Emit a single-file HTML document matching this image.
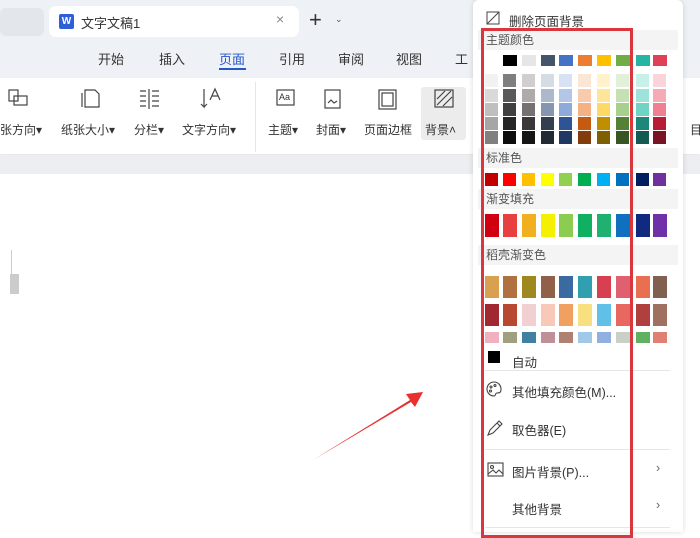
<!DOCTYPE html>
<html><head><meta charset="utf-8"><style>
*{margin:0;padding:0;box-sizing:border-box}
body{width:700px;height:532px;overflow:hidden;position:relative;background:#fff;font-family:"Liberation Sans","Noto Sans CJK SC",sans-serif;color:#333}
.a{position:absolute}
.t{font-size:13px;white-space:nowrap}
.sw{position:absolute;width:14px}
.lbl{position:absolute;left:478px;width:200px;height:20px;background:#f4f4f4;font-size:12px;color:#555;padding-left:8px;line-height:20px}
.mi{position:absolute;font-size:12.5px;color:#333;white-space:nowrap}
.sep{position:absolute;left:485px;width:185px;height:1px;background:#e6e6e6}
</style></head><body>
<!-- top chrome -->
<div class="a" style="left:0;top:0;width:700px;height:78px;background:#eef1f5"></div>
<div class="a" style="left:0;top:8px;width:44px;height:28px;background:#e3e6ea;border-radius:6px"></div>
<div class="a" style="left:49px;top:6px;width:250px;height:31px;background:#fff;border-radius:7px"></div>
<div class="a" style="left:59px;top:14px;width:15px;height:15px;background:#2f5fd8;border-radius:2px;color:#fff;font-size:10px;font-weight:bold;text-align:center;line-height:15px">W</div>
<div class="a t" style="left:81px;top:13px">文字文稿1</div>
<div class="a" style="left:276px;top:11px;font-size:14px;color:#888">×</div>
<div class="a" style="left:309px;top:7px;font-size:22px;color:#333">+</div>
<div class="a" style="left:335px;top:14px;font-size:9px;color:#555">⌄</div>
<div class="a t" style="left:98px;top:49px">开始</div>
<div class="a t" style="left:159px;top:49px">插入</div>
<div class="a t" style="left:219px;top:49px;color:#2656c8">页面</div>
<div class="a" style="left:219px;top:68px;width:27px;height:2px;background:#2656c8"></div>
<div class="a t" style="left:279px;top:49px">引用</div>
<div class="a t" style="left:338px;top:49px">审阅</div>
<div class="a t" style="left:396px;top:49px">视图</div>
<div class="a t" style="left:455px;top:49px">工</div>
<!-- ribbon -->
<div class="a" style="left:0;top:78px;width:700px;height:76px;background:#fff;box-shadow:0 1px 2px #ddd"></div>
<div class="a" style="left:0;top:155px;width:700px;height:19px;background:#eceef1"></div>
<div class="a" style="left:255px;top:82px;width:1px;height:70px;background:#e6e6e6"></div>
<div class="a" style="left:421px;top:87px;width:45px;height:53px;background:#ececec;border-radius:3px"></div>
<svg class="a" style="left:0;top:85px" width="470" height="30" fill="none" stroke="#444" stroke-width="1.2">
<rect x="9" y="5" width="9" height="11"/><rect x="14" y="11" width="13" height="9"/>
<path d="M85 5h10l4 4v13H85z M82 8v14"/>
<path d="M140 6h6M140 11h6M140 16h6M140 21h6M149 4v20M152 6h7M152 11h7M152 16h7M152 21h7"/>
<path d="M204 4v18l-3-3M204 22l3-3M210 15l5-11 5 11M212 11h6"/>
<rect x="277" y="5" width="17" height="15"/><rect x="325" y="5" width="15" height="18"/><path d="M328 18l3-3 3 3 3-2"/>
<rect x="379" y="5" width="17" height="19"/><rect x="382" y="8" width="11" height="13"/>
<rect x="435" y="5" width="18" height="17"/><path d="M437 14l8-8M437 20l14-14M443 21l9-9"/>
</svg>
<div class="a" style="left:279px;top:92px;font-size:9px">Aa</div>
<div class="a t" style="left:0;top:121px;font-size:12px">张方向▾</div>
<div class="a t" style="left:61px;top:121px;font-size:12px">纸张大小▾</div>
<div class="a t" style="left:134px;top:121px;font-size:12px">分栏▾</div>
<div class="a t" style="left:182px;top:121px;font-size:12px">文字方向▾</div>
<div class="a t" style="left:268px;top:121px;font-size:12px">主题▾</div>
<div class="a t" style="left:316px;top:121px;font-size:12px">封面▾</div>
<div class="a t" style="left:364px;top:121px;font-size:12px">页面边框</div>
<div class="a t" style="left:425px;top:121px;font-size:12px">背景˄</div>
<div class="a t" style="left:690px;top:121px;font-size:12px">目</div>
<!-- doc marks -->
<div class="a" style="left:11px;top:250px;width:1px;height:25px;background:#ccc"></div>
<div class="a" style="left:10px;top:274px;width:9px;height:20px;background:#ccc"></div>
<!-- arrow -->
<svg class="a" style="left:300px;top:380px" width="140" height="90"><path d="M13 80L110 20l-4-6 17-2-8 15-4-5z" fill="#e8302f"/></svg>
<!-- panel -->
<div class="a" style="left:473px;top:0;width:210px;height:532px;background:#fff;box-shadow:0 0 6px rgba(0,0,0,.15);border-radius:6px 6px 0 0"></div>
<svg class="a" style="left:486px;top:11px" width="14" height="14" fill="none" stroke="#444"><rect x="1" y="1" width="12" height="12"/><path d="M1 13L13 1"/></svg>
<div class="mi" style="left:509px;top:11px">删除页面背景</div>
<div class="lbl" style="top:30px">主题颜色</div>
<div class="lbl" style="top:148px">标准色</div>
<div class="lbl" style="top:189px">渐变填充</div>
<div class="lbl" style="top:245px">稻壳渐变色</div>
<div id="g"></div>
<!-- theme -->
<div class="sw" style="left:485px;top:55px;height:11px;background:#fff"></div>
<div class="sw" style="left:503px;top:55px;height:11px;background:#000"></div>
<div class="sw" style="left:522px;top:55px;height:11px;background:#e7e6e6"></div>
<div class="sw" style="left:541px;top:55px;height:11px;background:#44546a"></div>
<div class="sw" style="left:559px;top:55px;height:11px;background:#4472c4"></div>
<div class="sw" style="left:578px;top:55px;height:11px;background:#ed7d31"></div>
<div class="sw" style="left:597px;top:55px;height:11px;background:#ffc000"></div>
<div class="sw" style="left:616px;top:55px;height:11px;background:#70ad47"></div>
<div class="sw" style="left:636px;top:55px;height:11px;background:#26b5a5"></div>
<div class="sw" style="left:653px;top:55px;height:11px;background:#e04058"></div>
<svg class="a" style="left:485px;top:74px" width="185" height="72">
<g>
<rect x="0" y="0" width="13" height="13" fill="#f2f2f2"/><rect x="0" y="15" width="13" height="13" fill="#d9d9d9"/><rect x="0" y="29" width="13" height="13" fill="#bfbfbf"/><rect x="0" y="43" width="13" height="13" fill="#a6a6a6"/><rect x="0" y="57" width="13" height="13" fill="#808080"/>
<rect x="18" y="0" width="13" height="13" fill="#7f7f7f"/><rect x="18" y="15" width="13" height="13" fill="#595959"/><rect x="18" y="29" width="13" height="13" fill="#404040"/><rect x="18" y="43" width="13" height="13" fill="#262626"/><rect x="18" y="57" width="13" height="13" fill="#0d0d0d"/>
<rect x="37" y="0" width="13" height="13" fill="#d0cece"/><rect x="37" y="15" width="13" height="13" fill="#aeaaaa"/><rect x="37" y="29" width="13" height="13" fill="#757171"/><rect x="37" y="43" width="13" height="13" fill="#3b3838"/><rect x="37" y="57" width="13" height="13" fill="#161616"/>
<rect x="56" y="0" width="13" height="13" fill="#d6dce4"/><rect x="56" y="15" width="13" height="13" fill="#adb9ca"/><rect x="56" y="29" width="13" height="13" fill="#8496b0"/><rect x="56" y="43" width="13" height="13" fill="#333f4f"/><rect x="56" y="57" width="13" height="13" fill="#222a35"/>
<rect x="74" y="0" width="13" height="13" fill="#d9e2f3"/><rect x="74" y="15" width="13" height="13" fill="#b4c6e7"/><rect x="74" y="29" width="13" height="13" fill="#8eaadb"/><rect x="74" y="43" width="13" height="13" fill="#2f5496"/><rect x="74" y="57" width="13" height="13" fill="#1f3864"/>
<rect x="93" y="0" width="13" height="13" fill="#fbe5d5"/><rect x="93" y="15" width="13" height="13" fill="#f7cbac"/><rect x="93" y="29" width="13" height="13" fill="#f4b183"/><rect x="93" y="43" width="13" height="13" fill="#c55a11"/><rect x="93" y="57" width="13" height="13" fill="#833c0b"/>
<rect x="112" y="0" width="13" height="13" fill="#fff2cc"/><rect x="112" y="15" width="13" height="13" fill="#fee599"/><rect x="112" y="29" width="13" height="13" fill="#ffd966"/><rect x="112" y="43" width="13" height="13" fill="#bf8f00"/><rect x="112" y="57" width="13" height="13" fill="#7f6000"/>
<rect x="131" y="0" width="13" height="13" fill="#e2efd9"/><rect x="131" y="15" width="13" height="13" fill="#c5e0b3"/><rect x="131" y="29" width="13" height="13" fill="#a8d08d"/><rect x="131" y="43" width="13" height="13" fill="#538135"/><rect x="131" y="57" width="13" height="13" fill="#375623"/>
<rect x="151" y="0" width="13" height="13" fill="#c8f0ea"/><rect x="151" y="15" width="13" height="13" fill="#9ee3da"/><rect x="151" y="29" width="13" height="13" fill="#6fd4c6"/><rect x="151" y="43" width="13" height="13" fill="#1d877a"/><rect x="151" y="57" width="13" height="13" fill="#145a52"/>
<rect x="168" y="0" width="13" height="13" fill="#fad4da"/><rect x="168" y="15" width="13" height="13" fill="#f5aab6"/><rect x="168" y="29" width="13" height="13" fill="#f07f91"/><rect x="168" y="43" width="13" height="13" fill="#b81d36"/><rect x="168" y="57" width="13" height="13" fill="#7a1324"/>
</g></svg>
<svg class="a" style="left:485px;top:173px" width="185" height="14">
<rect x="0" width="13" height="13" fill="#c00000"/><rect x="18" width="13" height="13" fill="#ff0000"/><rect x="37" width="13" height="13" fill="#ffc000"/><rect x="56" width="13" height="13" fill="#ffff00"/><rect x="74" width="13" height="13" fill="#92d050"/><rect x="93" width="13" height="13" fill="#00b050"/><rect x="112" width="13" height="13" fill="#00b0f0"/><rect x="131" width="13" height="13" fill="#0070c0"/><rect x="151" width="13" height="13" fill="#002060"/><rect x="168" width="13" height="13" fill="#7030a0"/>
</svg>
<svg class="a" style="left:485px;top:214px" width="185" height="24">
<rect x="0" width="14" height="23" fill="#d00010"/><rect x="18" width="14" height="23" fill="#e84040"/><rect x="37" width="14" height="23" fill="#f0b020"/><rect x="56" width="14" height="23" fill="#f5f000"/><rect x="74" width="14" height="23" fill="#8ccc50"/><rect x="93" width="14" height="23" fill="#10b060"/><rect x="112" width="14" height="23" fill="#20b070"/><rect x="131" width="14" height="23" fill="#1070c0"/><rect x="151" width="14" height="23" fill="#102a80"/><rect x="168" width="14" height="23" fill="#7030a8"/>
</svg>
<svg class="a" style="left:485px;top:276px" width="185" height="70">
<rect x="0" width="14" height="22" fill="#d8a050"/><rect x="18" width="14" height="22" fill="#b07040"/><rect x="37" width="14" height="22" fill="#a08820"/><rect x="56" width="14" height="22" fill="#906048"/><rect x="74" width="14" height="22" fill="#3a6aa0"/><rect x="93" width="14" height="22" fill="#30a0b0"/><rect x="112" width="14" height="22" fill="#d84050"/><rect x="131" width="14" height="22" fill="#e06070"/><rect x="151" width="14" height="22" fill="#e87050"/><rect x="168" width="14" height="22" fill="#806050"/>
<rect x="0" y="28" width="14" height="22" fill="#a02830"/><rect x="18" y="28" width="14" height="22" fill="#b84830"/><rect x="37" y="28" width="14" height="22" fill="#f0d0d0"/><rect x="56" y="28" width="14" height="22" fill="#f8c8b8"/><rect x="74" y="28" width="14" height="22" fill="#f0a060"/><rect x="93" y="28" width="14" height="22" fill="#f8e080"/><rect x="112" y="28" width="14" height="22" fill="#60c0e8"/><rect x="131" y="28" width="14" height="22" fill="#e86860"/><rect x="151" y="28" width="14" height="22" fill="#b04040"/><rect x="168" y="28" width="14" height="22" fill="#a07060"/>
<rect x="0" y="56" width="14" height="11" fill="#f0b0c0"/><rect x="18" y="56" width="14" height="11" fill="#a0a080"/><rect x="37" y="56" width="14" height="11" fill="#4080a0"/><rect x="56" y="56" width="14" height="11" fill="#c09098"/><rect x="74" y="56" width="14" height="11" fill="#b08070"/><rect x="93" y="56" width="14" height="11" fill="#a0c8e8"/><rect x="112" y="56" width="14" height="11" fill="#90b0e0"/><rect x="131" y="56" width="14" height="11" fill="#c8d0c8"/><rect x="151" y="56" width="14" height="11" fill="#60b060"/><rect x="168" y="56" width="14" height="11" fill="#e08070"/>
</svg>
<div class="a" style="left:488px;top:351px;width:12px;height:12px;background:#000"></div>
<div class="mi" style="left:512px;top:352px">自动</div>
<div class="sep" style="top:370px"></div>
<svg class="a" style="left:486px;top:381px" width="16" height="16" fill="none" stroke="#444" stroke-width="1.1"><path d="M8 1a7 7 0 1 0 0 14c2 0 1-3 3-3s4 0 4-4A7 7 0 0 0 8 1z"/><circle cx="5" cy="6" r="1"/><circle cx="9" cy="4.5" r="1"/><circle cx="4.5" cy="10" r="1"/></svg>
<div class="mi" style="left:512px;top:382px">其他填充颜色(M)...</div>
<svg class="a" style="left:487px;top:420px" width="16" height="16" fill="none" stroke="#444" stroke-width="1.1"><path d="M1 15l2-5 7-7 3 3-7 7z M10 3l2-2 3 3-2 2"/></svg>
<div class="mi" style="left:512px;top:420px">取色器(E)</div>
<div class="sep" style="top:449px"></div>
<svg class="a" style="left:487px;top:462px" width="17" height="15" fill="none" stroke="#444" stroke-width="1.1"><rect x="1" y="1" width="15" height="13"/><circle cx="5" cy="5" r="1.5"/><path d="M1 12l5-4 3 3 3-3 4 4"/></svg>
<div class="mi" style="left:512px;top:462px">图片背景(P)...</div>
<div class="mi" style="left:656px;top:461px;color:#666">›</div>
<div class="mi" style="left:512px;top:499px">其他背景</div>
<div class="mi" style="left:656px;top:498px;color:#666">›</div>
<div class="sep" style="top:527px"></div>
<!-- red box -->
<div class="a" style="left:481px;top:28px;width:152px;height:510px;border:3px solid #d9363e"></div>
</body></html>
